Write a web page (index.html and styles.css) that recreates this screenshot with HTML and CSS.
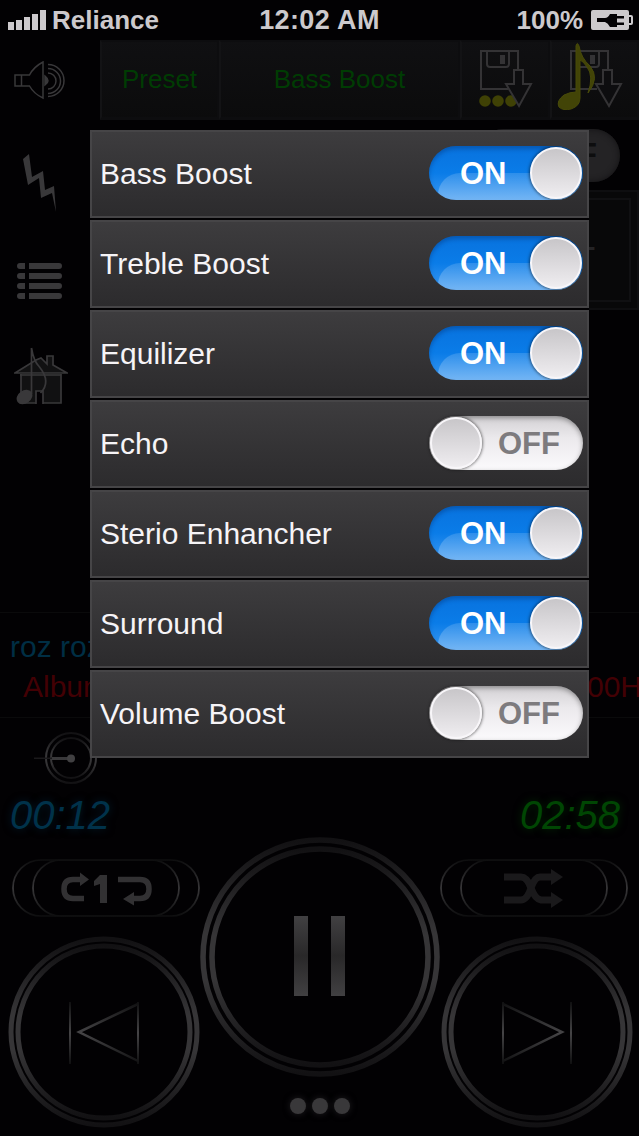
FILE: index.html
```
<!DOCTYPE html>
<html lang="en">
<head>
<meta charset="utf-8">
<title>Music Player</title>
<link rel="stylesheet" href="styles.css">
</head>
<body>
<div class="screen">
  <svg class="defs" width="0" height="0">
    <defs>
      <linearGradient id="ring" x1="0" y1="0" x2="0" y2="1"><stop offset="0" stop-color="#121113"/><stop offset=".1" stop-color="#1a191b"/><stop offset=".4" stop-color="#363537"/><stop offset=".6" stop-color="#363537"/><stop offset=".9" stop-color="#1a191b"/><stop offset="1" stop-color="#121113"/></linearGradient>
      <linearGradient id="pill" x1="0" y1="0" x2="0" y2="1"><stop offset="0" stop-color="#0e0e0f"/><stop offset=".5" stop-color="#39383a"/><stop offset="1" stop-color="#0e0e0f"/></linearGradient>
      <linearGradient id="skip" gradientUnits="userSpaceOnUse" x1="0" y1="64" x2="0" y2="130"><stop offset="0" stop-color="#0c0c0d"/><stop offset=".5" stop-color="#454446"/><stop offset="1" stop-color="#0c0c0d"/></linearGradient>
      <linearGradient id="bars" x1="0" y1="0" x2="0" y2="1"><stop offset="0" stop-color="#414042"/><stop offset=".5" stop-color="#292829"/><stop offset="1" stop-color="#414042"/></linearGradient>
    </defs>
  </svg>

  <header class="status">
    <div class="carrier">
      <svg width="38" height="20" viewBox="0 0 38 20" fill="#ccc9cc"><path d="M0 12h6v8H0zM8 10h6v10H8zM16 7h6v13h-6zM24 4h6v16h-6zM32 0h6v20h-6z"/></svg>
      <span>Reliance</span>
    </div>
    <div class="clock">12:02 AM</div>
    <div class="power">
      <span>100%</span>
      <svg width="42" height="20" viewBox="0 0 42 20"><path fill="#ccc9cc" d="M2 0h34q2 0 2 2v3h2q2 0 2 2v6q0 2-2 2h-2v3q0 2-2 2H2q-2 0-2-2V2q0-2 2-2z"/><path fill="#030104" d="M6 8h8q3 0 5-4h7v2h7v2.500h-7v4h7V15h-7v2h-7q-2-4-5-5H6zM38 7h2v6h-2z"/></svg>
    </div>
  </header>

  <div class="top">
    <div class="mute">
      <svg width="54" height="40" viewBox="0 0 54 40" fill="none" stroke="#39383a" stroke-width="1.500"><path d="M1 14h14.500q4-8 13.500-13v36q-9-4-13.500-12H1zM7.500 14v11"/><path d="M31 15q6 5 0 9z" fill="#39383a"/><path d="M34 12a8 8 0 0 1 0 16M34 7.500a12.500 12.500 0 0 1 0 25M34 3.500a16 16 0 0 1 0 32"/></svg>
    </div>
    <div class="tabs">
      <div class="tab preset">Preset</div>
      <div class="tab effect">Bass Boost</div>
      <div class="tab saver">
        <svg width="60" height="68" viewBox="0 0 60 68" fill="none" stroke="#343335" stroke-width="2"><path d="M31 47H4V9h37v19M10 9v13q0 3 3 3h16q3 0 3-3V9"/><path d="M23 13h5v9h-5z" fill="#343335" stroke="none"/><g fill="#3f4105" stroke="none"><circle cx="8" cy="59" r="5.800"/><circle cx="21" cy="59" r="5.800"/><circle cx="34" cy="59" r="5.800"/></g><path d="M37 28h9v14h8L42 64 29 42h8z" fill="#0d0d0f"/></svg>
      </div>
      <div class="tab noter">
        <svg width="72" height="68" viewBox="0 0 72 68" fill="none" stroke="#343335" stroke-width="2"><path d="M41 47H15V9h37v19M21 9v13q0 3 3 3h16q3 0 3-3V9"/><path d="M34 13h5v9h-5z" fill="#343335" stroke="none"/><path d="M47 28h9v14h9L53 64 40 42h7z" fill="#0d0d0f"/><path d="M20 4q1-5 3 0 2 12 11 20 10 12-2 27 6-17-1-26-4-6-7-7v38q0 8-9 11-8 2-12-2-3-6 5-12 6-3 12-3z" fill="#424407" stroke="#484a09" stroke-width="1"/></svg>
      </div>
    </div>
  </div>

  <main class="body">
    <nav class="side">
      <svg width="34" height="58" viewBox="0 0 34 58" fill="#39383a"><path d="M0 5L6 0 9 23 20 17 22 36 31 32 33 58 29 39 18 44 16 24 5 31z"/></svg>
      <svg width="46" height="37" viewBox="0 0 46 37" fill="#39383a"><path d="M3 0h5v6H3a3 3 0 0 1 0-6zM12 0h30a3 3 0 0 1 0 6H12zM3 10h5v6H3a3 3 0 0 1 0-6zM12 10h30a3 3 0 0 1 0 6H12zM3 20h5v6H3a3 3 0 0 1 0-6zM12 20h30a3 3 0 0 1 0 6H12zM3 30h5v6H3a3 3 0 0 1 0-6zM12 30h30a3 3 0 0 1 0 6H12z"/></svg>
      <svg width="54" height="60" viewBox="0 0 54 60" fill="none" stroke="#39383a" stroke-width="1.700"><path d="M1 26L22 13l5-2 6 6V9h6v9l14 8zM6 28h41M7 27v29h40V27" fill="#111112"/><path d="M22 57V44h7v13" fill="#030104"/><path d="M17.500 1q2 13 8 19 12 15 1 26M17.500 1v46"/><ellipse cx="10.500" cy="50" rx="8.500" ry="6.500" transform="rotate(-35 10.500 50)" fill="#39383a" stroke="none"/></svg>
    </nav>
    <div class="deck">
      <div class="bypass">OFF</div>
      <div class="pad"><div class="plus">+</div></div>
    </div>
  </main>

  <section class="track">
    <div class="title">roz roz</div>
    <div class="album"><span>Album</span><span>00H</span></div>
  </section>

  <div class="seek">
    <svg width="66" height="52" viewBox="0 0 66 52" fill="none"><circle cx="37" cy="26" r="25" stroke="url(#ring)" stroke-width="2"/><circle cx="37" cy="26" r="20" stroke="url(#ring)" stroke-width="2"/><path d="M0 25.500h37v1.500H0z" fill="#1a191b"/><path d="M18 25h19v3H18z" fill="#39383a"/><circle cx="37" cy="26.500" r="4" fill="#414042"/></svg>
  </div>

  <div class="times"><span class="elapsed">00:12</span><span class="remain">02:58</span></div>

  <footer class="controls">
    <div class="col left">
      <svg width="188" height="58" viewBox="0 0 188 58" fill="none"><g stroke="url(#pill)" stroke-width="1.700"><rect x="1" y="1" width="166" height="56" rx="28"/><rect x="21" y="1" width="166" height="56" rx="28"/></g><g stroke="#323133" stroke-width="5.500"><path d="M72 39.500H61q-9 0-9-9.500t9-9.500h8"/><path d="M106 20.500h22q9 0 9 9.500t-9 9.500h-8"/></g><g fill="#323133"><path d="M68 13.500l9 7-9 6.500zM122 33l-11 7 11 6.500zM88 16h7v28h-7V25l-6 2v-5z"/></g></svg>
      <svg width="192" height="192" viewBox="0 0 192 192" fill="none"><circle cx="96" cy="96" r="93" stroke="url(#ring)" stroke-width="5"/><circle cx="96" cy="96" r="86" stroke="url(#ring)" stroke-width="5"/><path d="M61 66h2v62h-2zM129 66h2v62h-2z" fill="url(#skip)"/><path d="M130 68L71 96l59 29" stroke="url(#skip)" stroke-width="2.500"/></svg>
    </div>
    <div class="col mid">
      <svg width="240" height="240" viewBox="0 0 240 240" fill="none"><circle cx="120" cy="120" r="117" stroke="url(#ring)" stroke-width="5.500"/><circle cx="120" cy="120" r="108" stroke="url(#ring)" stroke-width="5.500"/><path d="M94 79h14v80H94zM131 79h14v80h-14z" fill="url(#bars)"/></svg>
      <div class="dots"><i></i><i></i><i></i></div>
    </div>
    <div class="col right">
      <svg width="188" height="58" viewBox="0 0 188 58" fill="none"><g stroke="url(#pill)" stroke-width="1.700"><rect x="1" y="1" width="166" height="56" rx="28"/><rect x="21" y="1" width="166" height="56" rx="28"/></g><path d="M64 18h17q6 0 10 11t10 12h12M64 41h17q6 0 10-12t10-11h12" stroke="#1a191b" stroke-width="7"/><path d="M111 10l12 8-12 8zM111 33l12 8-12 8z" fill="#1a191b"/></svg>
      <svg width="192" height="192" viewBox="0 0 192 192" fill="none"><circle cx="96" cy="96" r="93" stroke="url(#ring)" stroke-width="5"/><circle cx="96" cy="96" r="86" stroke="url(#ring)" stroke-width="5"/><path d="M61 66h2v62h-2zM129 66h2v62h-2z" fill="url(#skip)"/><path d="M62 68l59 28-59 29" stroke="url(#skip)" stroke-width="2.500"/></svg>
    </div>
  </footer>

  <div class="menu">
    <div class="row"><span>Bass Boost</span><div class="switch on"><b>ON</b><i></i></div></div>
    <div class="row"><span>Treble Boost</span><div class="switch on"><b>ON</b><i></i></div></div>
    <div class="row"><span>Equilizer</span><div class="switch on"><b>ON</b><i></i></div></div>
    <div class="row"><span>Echo</span><div class="switch off"><i></i><b>OFF</b></div></div>
    <div class="row"><span>Sterio Enhancher</span><div class="switch on"><b>ON</b><i></i></div></div>
    <div class="row"><span>Surround</span><div class="switch on"><b>ON</b><i></i></div></div>
    <div class="row"><span>Volume Boost</span><div class="switch off"><i></i><b>OFF</b></div></div>
  </div>
</div>
</body>
</html>
```
FILE: styles.css
```
* { box-sizing: border-box; }
body { margin: 0; background: #020103; font-family: "Liberation Sans", Arial, sans-serif; }
svg { display: block; flex: none; }
.defs { position: absolute; }
.screen { position: relative; width: 639px; height: 1136px; overflow: hidden; display: flex; flex-direction: column; background: #020103; }

.status { height: 40px; flex: none; display: grid; grid-template-columns: 1fr auto 1fr; align-items: center; padding: 0 6px 0 8px; color: #ccc9cc; font-weight: bold; font-size: 26px; line-height: 40px; }
.carrier, .power { display: flex; align-items: center; gap: 6px; }
.power { justify-content: flex-end; gap: 8px; }
.clock { font-size: 27px; letter-spacing: .4px; padding-right: 2px; }

.top { height: 80px; flex: none; display: flex; }
.mute { width: 100px; flex: none; padding: 21px 0 0 14px; }
.tabs { flex: 1; display: grid; grid-template-columns: 119px 241px 90px 89px; background: linear-gradient(#101012, #0b0b0c); }
.tab { display: flex; justify-content: center; align-items: center; color: #003c03; font-size: 26px; border: 2px solid #0d0d0f; border-bottom-width: 3px; border-left-color: #131315; overflow: hidden; }
.saver { justify-content: flex-start; align-items: flex-start; padding-left: 15px; }
.noter { justify-content: flex-start; align-items: flex-start; padding-left: 4px; }

.body { height: 492px; flex: none; display: flex; justify-content: space-between; }
.side { width: 90px; padding-top: 34px; display: flex; flex-direction: column; }
.side svg:nth-child(1) { margin-left: 23px; }
.side svg:nth-child(2) { margin: 51px 0 0 17px; }
.side svg:nth-child(3) { margin: 47px 0 0 14px; }
.deck { padding-top: 9px; width: 162px; }
.bypass { width: 143px; height: 53px; border-radius: 27px; background: #242325; color: #0d0d0e; font-size: 31px; font-weight: bold; line-height: 51px; text-align: right; padding-right: 23px; box-shadow: inset 0 0 6px #121113; }
.pad { margin-top: 8px; height: 120px; background: #080809; border: 2px solid #0e0e10; padding: 6px; }
.plus { height: 104px; border: 2px solid #101012; border-left: 0; color: #242325; font-size: 40px; line-height: 96px; padding-left: 88px; }

.track { flex: none; height: 106px; border-top: 1px solid #0a0a0b; border-bottom: 1px solid #0a0a0b; padding-top: 17px; font-size: 30px; line-height: 34px; }
.title { padding-left: 10px; color: #002e44; }
.album { margin-top: 6px; padding-left: 23px; width: 660px; display: flex; justify-content: space-between; color: #430004; }
.album span:last-child { width: 73px; }

.seek { flex: none; padding: 14px 0 0 34px; }
.times { flex: none; height: 53px; display: flex; justify-content: space-between; padding: 8px 19px 0 10px; font-size: 40px; line-height: 46px; font-style: italic; }
.elapsed { color: #00324a; text-shadow: 0 0 8px #001c2a; }
.remain { color: #004603; text-shadow: 0 0 8px #002a02; }

.controls { flex: none; display: grid; grid-template-columns: 200px 240px 199px; height: 299px; }
.col { display: flex; flex-direction: column; }
.left, .right { padding-top: 22px; gap: 19px; }
.left { align-items: flex-end; }
.right svg:last-child { margin-left: 1px; }
.dots { display: flex; justify-content: center; gap: 6px; padding-top: 21px; }
.dots i { width: 16px; height: 16px; border-radius: 50%; background: #39383a; box-shadow: 0 0 7px #1e1d1f; }

.menu { position: absolute; left: 90px; top: 130px; width: 499px; display: flex; flex-direction: column; gap: 2px; background: #020103; }
.row { height: 88px; display: flex; align-items: center; justify-content: space-between; padding: 0 4px 2px 8px; border: 2px solid #464547; background: linear-gradient(#3d3c3e, #2c2b2d); color: #f6f4f7; font-size: 30px; }
.row span, .row b { padding-top: 2px; }
.switch { width: 154px; height: 54px; border-radius: 27px; display: flex; align-items: center; justify-content: space-between; font-size: 31px; }
.switch i { width: 52px; height: 52px; flex: none; border-radius: 50%; background: linear-gradient(#c8c6c9, #efedf0); border: 2px solid #f8f6f9; box-shadow: 0 0 3px 1px rgba(0, 0, 0, .5); }
.on { position: relative; padding: 0 1px 0 31px; color: #fff; background: linear-gradient(#0872de, #0a7ce8 50%, #3c98f0); box-shadow: inset 0 3px 4px rgba(0, 40, 100, .35); overflow: hidden; }
.on::before { content: ""; position: absolute; left: 9px; right: 0; top: 27px; height: 44px; border-radius: 22px; background: linear-gradient(rgba(255, 255, 255, .14), rgba(255, 255, 255, .28) 60%); }
.on b, .on i { position: relative; }
.off { padding: 0 23px 0 1px; color: #7d7b7e; background: linear-gradient(#d2d0d3, #ebe9ec 40%, #fbfafc); box-shadow: inset 0 2px 5px rgba(0, 0, 0, .35); }
```
